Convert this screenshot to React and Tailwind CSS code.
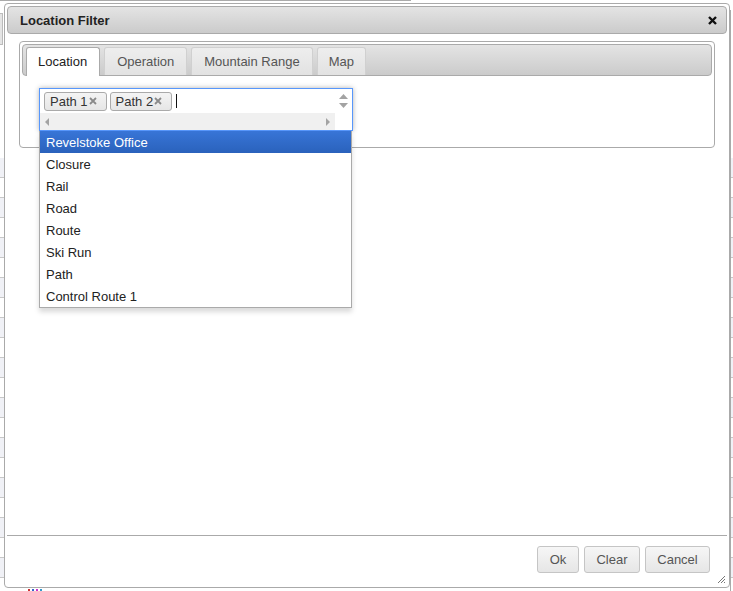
import React from "react";

const items = ["Revelstoke Office", "Closure", "Rail", "Road", "Route", "Ski Run", "Path", "Control Route 1"];

function Tag({ label }) {
  return (
    <div className="relative flex h-[19px] items-center rounded-[3px] border border-[#aaa] bg-gradient-to-b from-[#f4f4f4] to-[#e6e6e6] pl-[5px] pr-[18px] text-[13px] leading-none text-[#333]">
      {label}
      <svg className="absolute right-[9px] top-[4px]" width="8" height="8" viewBox="0 0 8 8">
        <path d="M1 1 L7 7 M7 1 L1 7" stroke="#8a8a8a" strokeWidth="1.8" />
      </svg>
    </div>
  );
}

function Btn({ label, w }) {
  return (
    <button className={`h-[27px] ${w} rounded-[3px] border border-[#c5c5c5] bg-gradient-to-b from-[#f6f6f6] to-[#e6e6e6] text-center text-[13px] text-[#555]`}>
      {label}
    </button>
  );
}

export default function App() {
  const rows = Array.from({ length: 22 });
  return (
    <div className="relative h-[591px] w-[733px] overflow-hidden bg-white font-['Liberation_Sans',Arial,sans-serif] text-[13px] text-[#222]">
      {/* background page */}
      <div className="absolute inset-0">
        <div className="h-[1px] w-[411px] bg-[#aaa]" />
        <div className="ml-0 mt-[12px] h-[32px] w-[3px] border-y border-r border-[#bbb] bg-[#e4e4e4]" />
        <div className="mt-[113px] flex flex-col">
          {rows.map((_, i) => (
            <div
              key={i}
              className={`h-[20px] border-b border-[#c8c8c8] ${i % 2 === 0 ? "bg-[#f0f1f6]" : "bg-white"}`}
            />
          ))}
        </div>
        <div className="absolute right-[2px] top-[10px] h-[581px] w-[1px] bg-[#aaa]" />
        <div className="absolute bottom-0 left-[28px] flex gap-[2px]">
          <span className="h-[2px] w-[2px] bg-[#c33]" />
          <span className="h-[2px] w-[2px] bg-[#36c]" />
          <span className="h-[2px] w-[2px] bg-[#c3c]" />
          <span className="h-[2px] w-[2px] bg-[#39c]" />
        </div>
      </div>

      {/* dialog */}
      <div className="absolute left-[4px] top-[3px] flex h-[585px] w-[726px] flex-col rounded-[4px] border border-[#aaa] bg-white p-[2px]">
        <div className="flex h-[28px] shrink-0 items-center justify-between rounded-[4px] border border-[#aaa] bg-gradient-to-b from-[#e4e4e4] to-[#cbcbcb] pl-[12px] pr-[9px] pt-[1px]">
          <span className="font-bold text-[#222]">Location Filter</span>
          <svg width="9" height="9" viewBox="0 0 9 9">
            <path d="M1 1 L8 8 M8 1 L1 8" stroke="#111" strokeWidth="2.4" />
          </svg>
        </div>

        <div className="flex-1 px-[12px] pt-[7px]">
          <div className="rounded-[4px] border border-[#aaa] p-[2px]">
            <div className="flex h-[32px] items-end gap-[4px] rounded-[4px] border border-[#aaa] bg-gradient-to-b from-[#e4e4e4] to-[#cbcbcb] pl-[3px]">
              <div className="-mb-[1px] flex h-[29px] items-center rounded-t-[3px] border border-b-0 border-[#aaa] bg-white pl-[11px] pr-[12px] text-[#212121]">
                Location
              </div>
              <div className="flex h-[28px] items-center rounded-t-[3px] border border-b-0 border-[#d0d0d0] bg-gradient-to-b from-[#eeeeee] to-[#e2e2e2] px-[12px] text-[#555]">
                Operation
              </div>
              <div className="flex h-[28px] items-center rounded-t-[3px] border border-b-0 border-[#d0d0d0] bg-gradient-to-b from-[#eeeeee] to-[#e2e2e2] px-[12px] text-[#555]">
                Mountain Range
              </div>
              <div className="flex h-[28px] items-center rounded-t-[3px] border border-b-0 border-[#d0d0d0] bg-gradient-to-b from-[#eeeeee] to-[#e2e2e2] px-[11px] text-[#555]">
                Map
              </div>
            </div>
            <div className="px-[17px] pb-[14px] pt-[12px]">
              <div className="relative z-10 w-[314px]">
                <div className="flex h-[43px] border border-[#5897fb] bg-white shadow-[0_0_5px_rgba(0,0,0,0.3)]">
                  <div className="flex flex-1 flex-col">
                    <div className="flex h-[24px] items-center gap-[3px] pl-[4px]">
                      <Tag label="Path 1" />
                      <Tag label="Path 2" />
                      <div className="ml-[1px] h-[14px] w-[1px] bg-[#111]" />
                    </div>
                    <div className="flex h-[17px] items-center justify-between bg-[#f0f0f0] px-[5px]">
                      <svg width="5" height="8" viewBox="0 0 5 8"><path d="M4 0 L0 4 L4 8 Z" fill="#a3a3a3" /></svg>
                      <svg width="5" height="8" viewBox="0 0 5 8"><path d="M1 0 L5 4 L1 8 Z" fill="#a3a3a3" /></svg>
                    </div>
                  </div>
                  <div className="flex w-[17px] flex-col">
                    <div className="flex h-[24px] flex-col items-center justify-center gap-[4px] bg-white">
                      <svg width="9" height="5" viewBox="0 0 9 5"><path d="M0 5 L4.5 0 L9 5 Z" fill="#a3a3a3" /></svg>
                      <svg width="9" height="5" viewBox="0 0 9 5"><path d="M0 0 L4.5 5 L9 0 Z" fill="#a3a3a3" /></svg>
                    </div>
                    <div className="h-[17px] bg-white" />
                  </div>
                </div>
                <div className="absolute left-0 top-full w-[313px] border border-t-0 border-[#aaa] bg-white shadow-[0_4px_5px_rgba(0,0,0,0.15)]">
                  {items.map((it, i) => (
                    <div
                      key={it}
                      className={`flex h-[22px] items-center pl-[6px] pt-[1px] ${
                        i === 0 ? "bg-gradient-to-b from-[#3875d7] to-[#2a62bc] text-white" : "text-[#222]"
                      }`}
                    >
                      {it}
                    </div>
                  ))}
                </div>
              </div>
            </div>
          </div>
        </div>

        <div className="relative flex shrink-0 justify-end gap-[5px] border-t border-[#aaa] pb-[12px] pr-[17px] pt-[10px]">
          <Btn label="Ok" w="w-[42px]" />
          <Btn label="Clear" w="w-[56px]" />
          <Btn label="Cancel" w="w-[65px]" />
          <svg className="absolute bottom-[1px] right-[1px]" width="9" height="9" viewBox="0 0 9 9">
            <path d="M8 1 L1 8 M8 4 L4 8 M8 7 L7 8" stroke="#777" strokeWidth="1" />
          </svg>
        </div>
      </div>
    </div>
  );
}
